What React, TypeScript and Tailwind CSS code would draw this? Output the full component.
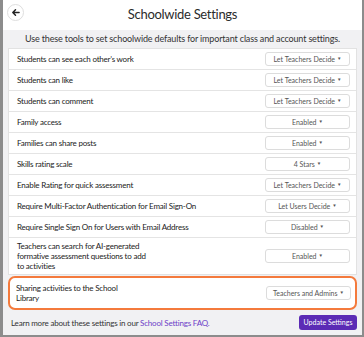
import React from "react";

const rows: { label: string; value: string }[] = [
  { label: "Students can see each other\u2019s work", value: "Let Teachers Decide" },
  { label: "Students can like", value: "Let Teachers Decide" },
  { label: "Students can comment", value: "Let Teachers Decide" },
  { label: "Family access", value: "Enabled" },
  { label: "Families can share posts", value: "Enabled" },
  { label: "Skills rating scale", value: "4 Stars" },
  { label: "Enable Rating for quick assessment", value: "Let Teachers Decide" },
  { label: "Require Multi-Factor Authentication for Email Sign-On", value: "Let Users Decide" },
  { label: "Require Single Sign On for Users with Email Address", value: "Disabled" },
];

function Drop({ value }: { value: string }) {
  return (
    <div className="w-[85px] h-[14px] shrink-0 rounded-[3px] border border-[#dcdcdc] bg-white flex items-center justify-center text-[7px] text-[#555] leading-none">
      {value}
      <span className="ml-[2px] text-[4.5px]">▼</span>
    </div>
  );
}

export default function App() {
  return (
    <div
      className="w-[364px] h-[337px] bg-[#8c8c8c] pl-[3px] pr-[2px] pb-[2px] overflow-hidden"
      style={{ fontFamily: "Lato, 'Noto Sans', sans-serif" }}
    >
      <div className="w-full h-full bg-white flex flex-col">
        <div className="h-[30px] relative flex items-center justify-center shrink-0">
          <div className="absolute left-[4px] top-[4px] w-[17px] h-[17px] rounded-full border border-[#dedede] flex items-center justify-center">
            <svg width="9" height="9" viewBox="0 0 10 10">
              <path d="M9 5H2.2M5 2L2 5l3 3" fill="none" stroke="#222" strokeWidth="1.6" strokeLinecap="round" strokeLinejoin="round" />
            </svg>
          </div>
          <div className="text-[13px] tracking-[-0.3px] text-[#2b2b2b] mt-[-1px]">Schoolwide Settings</div>
        </div>
        <div className="flex-1 bg-[#f1f1f3] flex flex-col px-[5px]">
          <div className="h-[18px] flex items-center justify-center text-[9px] tracking-[-0.15px] text-[#333] whitespace-nowrap">
            Use these tools to set schoolwide defaults for important class and account settings.
          </div>
          <div className="bg-white border border-[#e2e2e2] flex flex-col">
            {rows.map((r) => (
              <div
                key={r.label}
                className="h-[21px] border-b border-[#e4e4e4] flex items-center justify-between pl-[8px] pr-[6px]"
              >
                <span className="text-[8px] tracking-[-0.2px] text-[#222]">{r.label}</span>
                <Drop value={r.value} />
              </div>
            ))}
            <div className="h-[36px] flex items-center justify-between pl-[8px] pr-[6px]">
              <span className="text-[8px] tracking-[-0.2px] text-[#222] leading-[10px] w-[132px]">
                Teachers can search for AI-generated formative assessment questions to add to activities
              </span>
              <Drop value="Enabled" />
            </div>
          </div>
          <div className="mt-[1px] h-[34px] bg-white border-2 border-[#f47a3c] rounded-[7px] flex items-center justify-between pl-[6px] pr-[4px]">
            <span className="text-[8px] tracking-[-0.2px] text-[#222] leading-[10px] w-[110px]">
              Sharing activities to the School Library
            </span>
            <Drop value="Teachers and Admins" />
          </div>
          <div className="flex-1 flex items-center justify-between pl-[3px]">
            <span className="text-[8px] tracking-[-0.2px] text-[#333]">
              Learn more about these settings in our <span className="text-[#6d3ec8]">School Settings FAQ.</span>
            </span>
            <div className="h-[15px] w-[58px] rounded-[3px] bg-[#5b2bb5] text-white text-[7px] flex items-center justify-center">
              Update Settings
            </div>
          </div>
        </div>
      </div>
    </div>
  );
}
